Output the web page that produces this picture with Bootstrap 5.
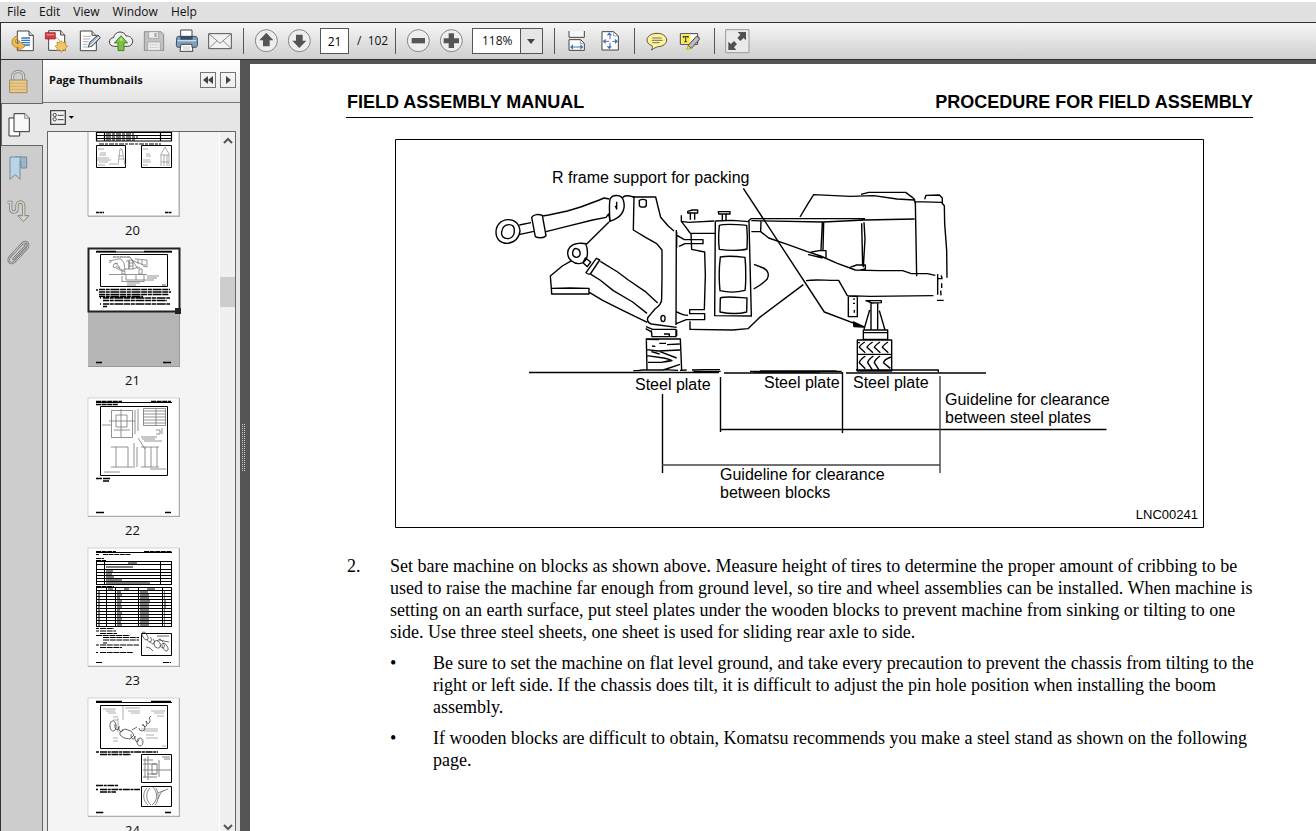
<!DOCTYPE html>
<html lang="en">
<head>
<meta charset="utf-8">
<meta name="viewport" content="width=device-width, initial-scale=1">
<title>Field Assembly Manual</title>
<link rel="stylesheet" href="https://cdn.jsdelivr.net/npm/bootstrap@5.3.0/dist/css/bootstrap.min.css">
<style>
  body { font-family: "Open Sans", "Noto Sans", sans-serif; font-size: 12px; line-height: 16px; color: #111; background: #fff; }
  svg { display: block; flex: none; }
  button { font: inherit; color: inherit; }
  .menu-strip { height: 22px; padding: 2px 0 0 7px; gap: 13px; background: linear-gradient(#fff 2px, #e1e1e1 2px); }
  .menu-strip a { color: #111; line-height: 20px; }
  .tool-strip { height: 38px; padding-left: 4px; border: solid #303030; border-width: 1px 0 1px 1px; background: linear-gradient(#f6f6f6, #cfcfcf); }
  .tool-btn { width: 33px; height: 36px; padding: 0; border: 0; background: none; display: flex; align-items: center; justify-content: center; }
  .tool-btn svg { width: 28px; height: 28px; }
  .sep { width: 1px; height: 26px; margin: 0 6px 0 7px; background: #555; }
  .page-field { width: 29px; height: 26px; padding: 0; text-align: center; border: 1px solid #555; background: #fff; }
  .page-total { width: 31px; margin-left: 8px; white-space: pre; }
  .zoom-field { width: 71px; height: 26px; padding: 0 0 0 9px; appearance: none; border: 1px solid #555; border-radius: 0; color: #111;
    background: url("data:image/svg+xml,%3Csvg xmlns='http://www.w3.org/2000/svg' width='22' height='24'%3E%3Cpath d='M0 0h22v24H0z' fill='%23e6e6e6'/%3E%3Cpath d='M.5 0v24' stroke='%23555'/%3E%3Cpath d='M7 10h8l-4 5z' fill='%23444'/%3E%3C/svg%3E") right center no-repeat #fff; }
  .workspace { min-height: 0; }
  .rail { width: 43px; background: #cdcdcd; border-left: 1px solid #303030; border-right: 1px solid #666; }
  .rail button { width: 41px; height: 43px; padding: 0 0 0 1px; border: 0; background: none; }
  .rail button svg { width: 32px; height: 42px; }
  .rail .on { width: 42px; background: #e7e7e7; border: solid #666; border-width: 1px 0 1px 1px; margin-right: -1px; padding: 0; }
  .side { width: 197px; background: #e6e6e6; }
  .side-head { height: 43px; padding: 0 4px 2px 6px; border-bottom: 1px solid #777; background: linear-gradient(#fff, #e4e4e4); }
  .side-title { font-size: 11px; line-height: 16px; font-weight: 700; margin: 0; }
  .mini-btn { width: 16px; height: 16px; padding: 0; border: 1px solid #777; background: none; }
  .side-opts { height: 28px; padding: 0 7px; }
  .opt-btn { padding: 0; border: 0; background: none; }
  .thumb-frame { margin: 0 4px; border: solid #666; border-width: 1px 1px 0 1px; background: #f4f4f4; }
  .thumb-list { padding-left: 38px; margin: 0; }
  .thumb-list svg { width: 95px; }
  .thumb-no { display: block; width: 93px; height: 28px; line-height: 22px; font-size: 13px; text-align: center; color: #111; }
  .track { width: 16px; background: #f0f0f0; border-left: 1px solid #fff; padding: 4px 0 0; }
  .track-gap { height: 19%; }
  .track-thumb { height: 30px; background: #cdcdcd; }
  .split { width: 10px; background: #555; padding: 5px 0 0 2px; }
  .grip { width: 4px; height: 48px; background: url("data:image/svg+xml,%3Csvg xmlns='http://www.w3.org/2000/svg' width='2' height='2'%3E%3Cpath d='M0 0h1v1H0z' fill='%23ccc'/%3E%3C/svg%3E"); }
  .doc { border-top: 4px solid #555; background: #fff; padding: 26px 63px 0 96px; color: #000; }
  .doc-head { font-family: "Liberation Sans", Arial, sans-serif; font-weight: 700; font-size: 18px; line-height: 24px; padding: 0 0 3px 1px; border-bottom: 1px solid #000; }
  .plate { margin: 21px 49px 27px 49px; }
  .plate text { font-family: "Liberation Sans", Arial, sans-serif; font-size: 16px; fill: #000; }
  .plate .plate-id { font-size: 13px; }
  .manual { font-family: "Liberation Serif", "Times New Roman", serif; font-size: 18px; line-height: 22px; padding-left: 1px; white-space: nowrap; }
  .manual p { margin: 0; }
  .num { width: 43px; flex: none; }
  .points { list-style: none; padding: 0; margin: 9px 0 0; }
  .points li { display: flex; margin-bottom: 9px; }
</style>
</head>
<body class="vh-100 d-flex flex-column overflow-hidden">

<nav class="menu-strip d-flex flex-shrink-0" aria-label="Menu">
  <a class="text-decoration-none" href="#">File</a>
  <a class="text-decoration-none" href="#">Edit</a>
  <a class="text-decoration-none" href="#">View</a>
  <a class="text-decoration-none" href="#">Window</a>
  <a class="text-decoration-none" href="#">Help</a>
</nav>

<div class="tool-strip d-flex align-items-center flex-shrink-0" role="toolbar" aria-label="Tools">
  <button class="tool-btn" aria-label="Open"><svg viewBox="22 81 84 84"><path d="M50 93h35l13 13v46H50z" fill="#fff" stroke="#444" stroke-width="3"/><path d="M85 93v13h13" fill="#ddd" stroke="#444" stroke-width="3"/><path d="M62 114h26M62 121h26M62 128h26M66 135h22" stroke="#2d77c8" stroke-width="4"/><path d="M50 108c-12 2-17 12-16 22 1 8 10 13 20 13v10l20-15-20-17v10c-8 0-10-3-9-8 0-5 3-7 7-8z" fill="#eebb4e" stroke="#9a6a12" stroke-width="2"/></svg></button>
  <button class="tool-btn" aria-label="Create PDF"><svg viewBox="121 81 84 84"><path d="M144 92h36l12 13v46h-48z" fill="#fff" stroke="#444" stroke-width="3"/><path d="M180 92v13h12" fill="#ddd" stroke="#444" stroke-width="3"/><path d="M165 112c8 5 14 11 16 18" stroke="#aaa" stroke-width="3" fill="none"/><path d="M134 98h30v19h-30z" fill="#d33b40" stroke="#8f171c" stroke-width="2"/><path d="M137 102h24v4h-24z" fill="#f08a8a"/><path d="m182 122 5 6 8-2-1 8 7 5-7 5 1 8-8-2-5 7-5-7-8 2 1-8-7-5 7-5-1-8 8 2z" fill="#f3c468" stroke="#a87620" stroke-width="2"/></svg></button>
  <button class="tool-btn" aria-label="Sign"><svg viewBox="220 81 84 84"><path d="M239 93h35l13 13v46h-48z" fill="#fff" stroke="#444" stroke-width="3"/><path d="M274 93v13h13" fill="#ddd" stroke="#444" stroke-width="3"/><path d="M247 109h24M247 117h22M247 125h17M247 133h13M247 141h20" stroke="#8a8a8a" stroke-width="2"/><path d="m263 141 4-14 25-22 7 8-24 25z" fill="#9db8d2" stroke="#333" stroke-width="2.500"/><path d="m267 139 28-28" stroke="#fff" stroke-width="3"/></svg></button>
  <button class="tool-btn" aria-label="Send online"><svg viewBox="321 81 84 84"><path d="M344 139c-10 0-16-6-16-13 0-8 6-13 13-13 1-10 9-17 19-17 9 0 15 5 18 12 10-1 20 6 20 16 0 9-7 15-16 15z" fill="#f2f2f2" stroke="#444" stroke-width="3"/><path d="m363 107 20 22h-11v23h-18v-23h-11z" fill="#7cc142" stroke="#35761b" stroke-width="2.500"/><path d="m363 112 7 10h-12z" fill="#b9e38f"/></svg></button>
  <button class="tool-btn" aria-label="Save"><svg viewBox="420 81 84 84"><path d="M433 95h50l8 8v48h-58z" fill="#c2c2c2" stroke="#8d8d8d" stroke-width="3"/><path d="M446 95h29v20h-29zM443 126h38v25h-38z" fill="#eee" stroke="#999" stroke-width="2"/><path d="M463 99h7v12h-7z" fill="#aaa"/><path d="M449 134h26M449 142h26" stroke="#aaa" stroke-width="2" stroke-dasharray="4 2"/></svg></button>
  <button class="tool-btn" aria-label="Print"><svg viewBox="519 81 84 84"><path d="M542 90h34v27h-34z" fill="#fff" stroke="#444" stroke-width="3"/><path d="M530 115q0-6 6-6h48q8 0 8 7v20q0 6-6 6h-51q-6 0-6-6z" fill="#7f9fbd" stroke="#37516a" stroke-width="3"/><path d="M541 108h37v11h-37z" fill="#394d60"/><path d="M532 122h57" stroke="#c9dae9" stroke-width="4"/><path d="M543 133h32l4 21h-39z" fill="#fff" stroke="#444" stroke-width="3"/><path d="M549 141h21M549 147h21" stroke="#aaa" stroke-width="2"/></svg></button>
  <button class="tool-btn" aria-label="Mail"><svg viewBox="618 81 84 84"><path d="M626 101h68v45h-68z" fill="#f2f2f2" stroke="#555" stroke-width="3"/><path d="m627 102 33 28 33-28M627 145l24-23M693 145l-24-23" fill="none" stroke="#777" stroke-width="2.500"/></svg></button>
  <span class="sep"></span>
  <button class="tool-btn" aria-label="Previous page"><svg viewBox="9 21 84 84"><circle cx="49" cy="62" r="33" fill="#eee" stroke="#858585" stroke-width="3"/><path d="m49 38 21 23H59v18H39V61H28z" fill="#555"/></svg></button>
  <button class="tool-btn" aria-label="Next page"><svg viewBox="108 21 84 84"><circle cx="148" cy="62" r="33" fill="#eee" stroke="#858585" stroke-width="3"/><path d="m148 84-21-22h11V44h20v18h11z" fill="#555"/></svg></button>
  <input class="page-field ms-1" type="text" value="21" aria-label="Page number">
  <span class="page-total">/  102</span>
  <span class="sep"></span>
  <button class="tool-btn" aria-label="Zoom out"><svg viewBox="465 21 84 84"><circle cx="505" cy="62" r="33" fill="#eee" stroke="#858585" stroke-width="3"/><path d="M485 54h40v16h-40z" fill="#555"/></svg></button>
  <button class="tool-btn" aria-label="Zoom in"><svg viewBox="564 21 84 84"><circle cx="604" cy="62" r="33" fill="#eee" stroke="#858585" stroke-width="3"/><path d="M596 40h16v15h15v15h-15v14h-16V70h-15V55h15z" fill="#555"/></svg></button>
  <select class="zoom-field mx-1" aria-label="Zoom"><option>118%</option><option>100%</option></select>
  <span class="sep"></span>
  <button class="tool-btn" aria-label="Fit width"><svg viewBox="73 21 84 84"><path d="M88 33v19h46V33" fill="#f8f8f8" stroke="#444" stroke-width="3"/><path d="M88 91V59h35l11 11v21z" fill="#fff" stroke="#444" stroke-width="3"/><path d="M122 60v11h11" fill="none" stroke="#777" stroke-width="2"/><path d="M94 81h34" stroke="#4a6fb5" stroke-width="3"/><path d="m91 81 9-8v16zM131 81l-9-8v16z" fill="#4a6fb5"/></svg></button>
  <button class="tool-btn" aria-label="Fit page"><svg viewBox="172 21 84 84"><path d="M187 35h35l14 13v42h-49z" fill="#fff" stroke="#444" stroke-width="3"/><path d="M222 35v13h14" fill="none" stroke="#777" stroke-width="2"/><path d="M211 45v38M195 64h34" stroke="#4a6fb5" stroke-width="3" stroke-dasharray="13 10"/><path d="m209 37 8 9h-16zM209 88l8-9h-16zM189 64l9-8v16zM235 64l-9-8v16z" fill="#4a6fb5"/></svg></button>
  <span class="sep"></span>
  <button class="tool-btn" aria-label="Comment"><svg viewBox="312 21 84 84"><path d="M351 40c17 0 29 9 29 20s-11 19-25 20c-6 1-13 5-21 10 4-6 4-10 2-13-9-3-15-9-15-17 0-11 13-20 30-20z" fill="#fff49b" stroke="#5b5934" stroke-width="3"/><path d="M337 54h28M335 61h33M337 68h22" stroke="#555" stroke-width="2.500"/></svg></button>
  <button class="tool-btn" aria-label="Highlight text"><svg viewBox="411 21 84 84"><path d="M421 41h52v32h-52z" fill="#fff" stroke="#444" stroke-width="3"/><path d="M424 44h27v26h-27z" fill="#ffea38"/><path d="M429 50h16M437 50v15M433 65h8M430 48v6M444 48v6" fill="none" stroke="#333" stroke-width="3"/><path d="m444 77 25-28 8 3 1 7-24 26z" fill="#bbb" stroke="#444" stroke-width="3"/><path d="m439 88 6-10 8 8z" fill="#ffe500" stroke="#b09c00" stroke-width="2"/></svg></button>
  <span class="sep"></span>
  <button class="tool-btn" aria-label="Full screen"><svg viewBox="551 21 84 84"><path d="M556 29h70v69h-70z" fill="#eaeaea" stroke="#999" stroke-width="3"/><path d="M617 36v25l-7-7-10 9-9-9 9-10-8-8zM564 90V65l8 7 9-9 9 9-9 10 7 8z" fill="#505050"/></svg></button>
</div>

<div class="workspace d-flex flex-grow-1 overflow-hidden">
  <div class="rail d-flex flex-column flex-shrink-0">
    <button aria-label="Security"><svg viewBox="8 0 96 126"><path d="M40 60V46c0-19 33-19 33 0v14" fill="none" stroke="#888" stroke-width="9"/><path d="M40 60V46c0-19 33-19 33 0v14" fill="none" stroke="#ddd" stroke-width="4"/><path d="M31 57h52v38H31z" fill="#e9c98a" stroke="#a38957" stroke-width="3"/><path d="M33 67h48M33 76h48M33 85h48" stroke="#c29f5c" stroke-width="2"/></svg></button>
    <button class="on" aria-label="Page thumbnails"><svg viewBox="7 128 96 126"><path d="M28 170h32v54H28z" fill="#fff" stroke="#333" stroke-width="3"/><path d="M43 157h33l13 13v41H43z" fill="#f8f8f8" stroke="#333" stroke-width="3"/><path d="M75 157v14h14" fill="#ddd" stroke="#666" stroke-width="2"/></svg></button>
    <button aria-label="Bookmarks"><svg viewBox="8 257 96 126"><path d="M48 287h34v33H65v-19H48z" fill="#9bb8c9" stroke="#718b9a" stroke-width="3"/><path d="M32 287h35q-5 3-5 10v57l-14-14-16 14z" fill="#b9d5e5" stroke="#718b9a" stroke-width="3"/></svg></button>
    <button aria-label="Articles"><svg viewBox="8 387 96 126"><path d="M25 424h9v18c0 16 19 14 19 0v-7c0-16 20-16 20 0v31" fill="none" stroke="#7f8678" stroke-width="10"/><path d="m56 464 33 0-17 18z" fill="#d3d6ca" stroke="#7f8678" stroke-width="3"/><path d="M26 424h8v18c0 16 19 14 19 0v-7c0-16 20-16 20 0v33" fill="none" stroke="#d3d6ca" stroke-width="5"/></svg></button>
    <button aria-label="Attachments"><svg viewBox="8 514 96 126"><path d="m42 592 34-36c7-8-3-15-9-8l-34 36c-12 14 2 28 14 15l35-38c13-15-3-27-15-14l-24 26" fill="none" stroke="#777" stroke-width="7" stroke-linecap="round"/><path d="m42 592 34-36c7-8-3-15-9-8l-34 36c-12 14 2 28 14 15l35-38c13-15-3-27-15-14l-24 26" fill="none" stroke="#ccc" stroke-width="3" stroke-linecap="round"/></svg></button>
  </div>

  <aside class="side d-flex flex-column flex-shrink-0">
    <div class="side-head d-flex align-items-center flex-shrink-0">
      <h1 class="side-title me-auto">Page Thumbnails</h1>
      <button class="mini-btn" aria-label="Collapse"><svg width="14" height="14"><path d="M7 3v8L2 7zM12 3v8L7 7z" fill="#444"/></svg></button>
      <button class="mini-btn ms-1" aria-label="Expand"><svg width="14" height="14"><path d="M5 3v8l5-4z" fill="#444"/></svg></button>
    </div>
    <div class="side-opts d-flex align-items-center flex-shrink-0">
      <button class="opt-btn" aria-label="Options"><svg width="25" height="15" viewBox="150 328 75 45"><path d="M152 330h44v41h-44z" fill="#f3f3f3" stroke="#444" stroke-width="4"/><circle cx="164" cy="343" r="5" fill="none" stroke="#444" stroke-width="3"/><circle cx="164" cy="356" r="5" fill="none" stroke="#444" stroke-width="3"/><path d="M173 344h18M173 357h18" stroke="#444" stroke-width="3"/><path d="M206 346h16l-8 8z" fill="#000"/></svg></button>
    </div>
    <div class="thumb-frame d-flex flex-grow-1 overflow-hidden">
      <ul class="thumb-list list-unstyled flex-grow-1">
        <li><svg height="87" viewBox="86 132 95 87"><path d="M88 130h92v87H88z" fill="#bbb"/><path d="M88 130h91v86H88z" fill="#fff" stroke="#aaa"/>
          <path d="M96 132.500h76M96 135.500h76M96 138.500h76M96 141h76M96.500 132v9M104.500 132v9M160.500 132v9M171.500 132v9" stroke="#000" stroke-width="1.200"/>
          <path d="M106 134h28M106 137h32M106 140h30M99 144h62" stroke="#000" stroke-width="1.200" stroke-dasharray="5 1 3 1"/>
          <path d="M96.500 145.500h29v22h-29zM141.500 145.500h30v22h-30z" fill="none" stroke="#000"/><path d="M98 149h6M100 153h6M99 155h7M97 158h12M97 160h14M99 162h9M98 165h7M109 164h8M118 165l2-16h2l3 16M119 159h5M118 156h5M143 149h5M146 154h4M146 156h5M143 160h7M143 162h8M143 165h5M161 166v-12l4-7 4 7v12M161 155h8M161 162h8M164 155v11M167 155v11" fill="none" stroke="#888" stroke-width=".7"/>
          <path d="M96 212.500h8M165 212.500h7" stroke="#000" stroke-width="1.500" stroke-dasharray="3 .5"/></svg><a class="thumb-no text-decoration-none" href="#">20</a></li>
        <li><svg height="122" viewBox="86 247 95 122"><path d="M88 248h92v119H88z" fill="#999"/><path d="M88 248h91v118H88z" fill="#b5b5b5"/><path d="M88.500 248.500h91v63h-91z" fill="#fff" stroke="#222" stroke-width="2"/><path d="M175 308h6v6h-6z" fill="#222"/>
          <path d="M96 252h76" stroke="#000"/><path d="M96 251.500h20M144 251.500h28" stroke="#000" stroke-width="1.500"/><path d="M100.500 254.500h67v32h-67z" fill="none" stroke="#000"/>
          <path d="M113 257h17" stroke="#555" stroke-dasharray="3 .5"/><path d="M109 262a1 1 0 1 0 0-1M110 261l8-2 3 0 3 4 1 7-3 0-6-4M114 264l2-1 4 5M114 264l-1 3 3 1 6 3M118 263l-3 1M126 261h3v8h-4M129 260v9h4v-9zM129 263h4M129 266h4M133 261l6 2 4 2h3M135 259l12 1v7l-4-1M138 260v4M142 260v5M133 269l5-2 2 1M122 271h3v3h-3zM139 269h3v5h-3zM130 257l8 12M109 274.500h38M122 276v6M126 275v5h28M136 275v5M144 275v7M122 281.500h22M147 276h12M147 278h10M127 283h13M127 285h9" fill="none" stroke="#666" stroke-width=".7"/>
          <path d="M162 285h4" stroke="#333" stroke-width=".8"/>
          <path d="M96 290h2M99 289.500h71M99 292h72M99 294.500h70M103 298h67M103 300.500h64M103 304h67M103 306.500h4M100 298h1M100 304h1M99 296.500h44" stroke="#000" stroke-width="1.400" stroke-dasharray="6 .7 4 .7 9 .7"/>
          <path d="M96 362.500h6M163 362.500h8" stroke="#000" stroke-width="1.500"/></svg><a class="thumb-no text-decoration-none" href="#">21</a></li>
        <li><svg height="122" viewBox="86 397 95 122"><path d="M88 398h92v119H88z" fill="#aaa"/><path d="M88 398h91v118H88z" fill="#fff" stroke="#bbb" stroke-width=".6"/>
          <path d="M96 402.500h76" stroke="#000"/><path d="M96 401.500h26M151 401.500h20M96 404.500h22" stroke="#000" stroke-width="1.500" stroke-dasharray="5 .6"/><path d="M100.500 406.500h67v69h-67z" fill="none" stroke="#000"/>
          <path d="M111.500 410.500h21v27h-21zM116 415h11v12h-11zM109 421h26M121 409v28M114 430h16M135 410v24M138 409v22M102 425h9M143.500 408.500h22v17h-22zM143 411h23M143 414h23M143 417h23M143 420h23M143 423h23M156 409v17M156 430h4v4h-4M162 428v6M141 437h16M138 438l7 11M111 447h17M111 467h22M116 447v20M128 447v20M134 443v25M137 447v20M141 447h18M145 447v20M151 447v20M157 447v20M141 467h18M104 472h16M150 469h16M142 439h13M144 441h18" fill="none" stroke="#777" stroke-width=".8"/>
          <path d="M96 478.500h6M103 478.500h7M103 481h6M96 512.500h8M165 512.500h6" stroke="#000" stroke-width="1.500"/></svg><a class="thumb-no text-decoration-none" href="#">22</a></li>
        <li><svg height="122" viewBox="86 547 95 122"><path d="M88 548h92v119H88z" fill="#aaa"/><path d="M88 548h91v118H88z" fill="#fff" stroke="#bbb" stroke-width=".6"/>
          <path d="M96 552.500h76" stroke="#000"/><path d="M96 551.500h20M144 551.500h28M96 554.500h3M103 554.500h28M96 558.500h8M96 560.500h10M96 586.500h18" stroke="#000" stroke-width="1.200" stroke-dasharray="5 .6"/>
          <path d="M96 561.500h76M96 564.500h76M96 569.500h76M96 572.500h76M96 575.500h76M96 578.500h76M96 581.500h76M96 584.500h76M96.500 561v24M104.500 561v24M160.500 561v24M171.500 561v24M96 587.500h76M96 590.500h76M96 593.500h76M96 596.500h76M96 599.500h76M96 602.500h76M96 605.500h76M96 608.500h76M96 611.500h76M96 614.500h76M96 617.500h76M96 620.500h76M96 623.500h76M96 626.500h76M96.500 587v40M106.500 587v40M115.500 587v40M138.500 587v40M162.500 587v40M171.500 587v40" stroke="#000"/>
          <path d="M106 567h27M106 571h7M106 574h6M106 577h8M106 580h16M106 583h44M128 563h9M108 589h5M124 589h5M147 589h8M117 592h4M140 592h8M117 595h5M140 595h9M117 598h3M140 598h9M117 601h5M140 601h10M117 604h4M140 604h9M117 607h5M140 607h9M117 610h3M140 610h9M117 613h5M140 613h9M117 616h4M140 616h9M117 619h5M140 619h9M117 622h4M140 622h9M117 625h5M140 625h9M98 592h2M98 595h2M98 598h2M98 601h2M98 604h2M98 607h2M98 610h2M98 613h2M98 616h2M98 619h2M98 622h2M98 625h2M164 592h1M164 595h1M164 598h1M164 601h2M164 604h2M164 607h2M164 610h1M164 613h1M164 616h1M164 619h1M164 622h1M164 625h1" stroke="#000"/>
          <path d="M96 628.500h3M100 628.500h14M96 631h3M100 631h16M100 633.500h17M96 635.500h34M103 637.500h36M103 640h36M103 643h4M96 645h3M100 645h39M100 647.500h22M96 652.500h2M100 652.500h33M96 662.500h6M163 662.500h8" stroke="#000" stroke-width="1.200" stroke-dasharray="6 .7"/>
          <path d="M141.500 633.500h30v22h-30z" fill="none" stroke="#000"/><path d="M143 637a2 4 -30 1 0 4-2 2 4-30 0 0-4 2M147 639a2 3-30 1 0 3-2M150 641a2 3-30 1 0 3-2M154 644a3 4-30 1 0 4-3 3 4-30 0 0-4 3M163 648a2 4-30 1 0 4-2 2 4-30 0 0-4 2M160 645a2 3-30 1 0 3-2M157 641l3-2 3 3M146 647l4 1 3 3M157 636h12M159 640l10 2" fill="none" stroke="#555" stroke-width=".9"/></svg><a class="thumb-no text-decoration-none" href="#">23</a></li>
        <li><svg height="122" viewBox="86 697 95 122"><path d="M88 698h92v119H88z" fill="#aaa"/><path d="M88 698h91v118H88z" fill="#fff" stroke="#bbb" stroke-width=".6"/>
          <path d="M96 702.500h76" stroke="#000"/><path d="M96 701.500h26M151 701.500h20" stroke="#000" stroke-width="1.500"/><path d="M100.500 705.500h67v43h-67zM141.500 754.500h30v28h-30zM141.500 786.500h30v20h-30z" fill="none" stroke="#000"/>
          <path d="M103 709h13M106 711h9M108 713h8M125 708h15M128 711h12M131 713h9M151 711h14M154 713h10M157 716h7M118 718v14M123 706v14M113 717h5M113 720h5M113 738h5M113 741h5M141 729h17M144 731h14M146 735h8M146 738h12M162 746h4" fill="none" stroke="#999" stroke-width=".8"/>
          <path d="M110 727a3 5 0 1 0 6-2 3 5 0 0 0-6 2M115 724a2 4 0 1 0 4 3M119 726a2 4 0 1 0 4 3M120 732l5-3 6 2 3 4-4 4-6-1-4-3zM131 734a2 4 0 1 0 4 2M135 736a2 4 0 1 0 4 3M137 742a3 4 0 1 0 5-3 3 4 0 0 0-5 3M132 730l5-3M139 728a3 3 0 1 0 3-3M143 724a2 3 0 1 0 3-3M146 721a2 3 0 1 0 3-3l2-2" fill="none" stroke="#444" stroke-width=".8"/>
          <path d="M143 760h10M143 764h14M148 756v24M152 764h5v10h-5zM159 760v17M143 770h28M143 777h14M147 774h9M145 758v20M162 757h8M164 759h6M147 788c-5 5-4 13 1 17M153 787c5 6 5 13-1 18M156 788c3 6 3 12-1 17M150 788c-5 5-4 13 1 17M158 793l10-4M158 799q2-7 6-9" fill="none" stroke="#777" stroke-width=".9"/>
          <path d="M96 752h3M100 752h58M100 754.500h31M96 785.500h22M96 789.500h2M100 789.500h40M100 792h16M96 812.500h8M165 812.500h6" stroke="#000" stroke-width="1.300" stroke-dasharray="7 .7 3 .7"/></svg><a class="thumb-no text-decoration-none" href="#">24</a></li>
      </ul>
      <div class="track d-flex flex-column">
        <svg width="15" height="9"><path d="m4 7 4-4 4 4" fill="none" stroke="#555" stroke-width="2"/></svg>
        <div class="track-gap"></div>
        <div class="track-thumb flex-shrink-0"></div>
        <svg class="mt-auto" width="15" height="9"><path d="m4 3 4 4 4-4" fill="none" stroke="#555" stroke-width="2"/></svg>
      </div>
    </div>
  </aside>

  <div class="split d-flex flex-column justify-content-center flex-shrink-0"><div class="grip"></div></div>

  <main class="doc flex-grow-1 overflow-hidden">
    <header class="doc-head d-flex justify-content-between"><span>FIELD ASSEMBLY MANUAL</span><span>PROCEDURE FOR FIELD ASSEMBLY</span></header>
    <figure class="plate">
      <svg class="w-100" viewBox="395 139 809 389" role="img" aria-label="Machine set on blocks">
        <path d="M395.500 139.500h808v388h-808z" fill="#fff" stroke="#000"/>
        <g fill="none" stroke="#000" stroke-width="4.200" stroke-linejoin="round">
          <g transform="translate(480 130) scale(.33333)">
            <path d="M120 303c-2 20-16 36-38 37-20 0-34-12-34-34 0-20 14-36 36-37 20-1 34 12 36 34zM103 301c1 15-8 25-20 25-13 0-20-8-18-20 2-14 10-22 22-22 10 0 16 6 16 17zM118 285l35-7M120 313l42-9M155 262c6-10 22-10 32-6l11 61c-8 8-22 8-32 3zM188 258l18-3 56-12 40-12 56-21 14-6 16 3M198 305l60-15 80-20 40-8 8-10 5 23"/>
            <path d="M389 274c1-20-3-50 1-66 6-16 36-16 40 3 5 16 2 32-8 44-10 12-22 15-33 19zM410 215v22l-4-10M387 276l-67 66c-14-4-38-4-50 9-12 14-7 34 5 42 14 12 34 10 42-3 8-10 6-36 0-48M275 392l-28 16-36 30 3 37M300 367c2 9-4 15-11 15-8-1-12-6-11-14 1-9 6-14 12-12 6 1 9 6 10 11zM214 475l56-1 57 1v17H215zM328 487l40 24 60 30 74 36M309 398l7-14 16 12-10 14zM318 428l31-43 10 5-28 42q-8 2-13-4zM361 394l52 32 32 24 50 34 38 35M333 433l27 17 40 32 58 34 43 34"/>
            <path d="M428 203c6-10 20-6 32-2h67l8 33 7 28 22 25 18 16M462 198l-2 102 38 23 32 18 16 19v82l-1 65c0 14-7 21-20 30l-16 19c-10 8-9 22 5 26l76 10M478 211c8-4 14-4 21 0v14c0 9-20 8-21 1zM543 560c6-6 13-3 12 4 1 16-12 11-12 3zM589 300l-1 285M591 316l22 13h56v12h-54l-18 8M633 310l2 48 39 8 2 70-3 103h-44v12h45v18h-55l-30 12M630 574v23M590 546c10 2 14 10 34 10M590 305v48"/>
            <path d="M498 590l20 8h70v22h-72l-2-19M497 596l16 9M497 627h104l4 94M499 626l2 93M497 628l40 1M516 648l10 1M538 640h20M561 644l38-2M500 659l34 4 66-3M514 665l25 7M501 677l50 7c34 8 34 10-2 12M540 665l50 19M504 697h40l27-6M550 720l50-17M460 722h14l12-2h66M550 719l44 2M552 612h16v8M590 600v18M600 721l20-1M636 720l40-1h44" />
          </g>
          <g transform="translate(660 180) scale(.33333)">
            <path d="M83 94l14-4h16v9H83zM91 101v18M104 101v18M175 95h35v7h-34zM187 103v18M198 103v18M64 106v18l14 18 12 17M65 124l20 3 78-4M90 160h75M166 124l-2 283 112 1M166 123l50-2 51 4 7 283M178 136c10-3 50-3 82 0l2 34-1 37c-20 6-60 5-83 1-3-20-2-50 0-72zM181 231c20-4 50-2 74 1 3 30 3 80 0 99-30 8-54 6-75 1-3-30-3-70 1-101zM181 354c16-6 50-2 80 0l-1 42c-30 8-60 4-80 0z"/>
            <path d="M265 123l8-7h342M274 122l216 4 124-6 150-3M303 124l-1 30-28 1M302 155l24 19 56 19 60 22 40 13 50 22 54 20 70 2h72l26 9h48l24 5M420 111l24-40 17-27 110 5 70-2 70 10 52 3M603 43l23-6h111l16 12 10 8M766 65l78 2 9 10 1 54 6 80 1 82M794 58l4-12 40-1 9 9v14M766 65l4 224M763 57l4 20M487 128l-4 82M491 128l-2 82M483 212h15v26M454 216l29-5M454 216l-8 8 42 10M612 127l3 50-5 85M605 130l3 128M570 262l20-7h26v12l-24 5M833 282v62M844 286l2 10h-14M845 310v14M842 332l1 14M831 361h20"/>
            <path d="M282 253l28 11c16 8 18 22 11 34-10 10-24 20-40 29M88 448l130 2 46-4 34-33 132-99M438 302c30-5 60 0 98-1l26 46 68 2 190-2M565 348l27 1v61h-27zM582 355v5M579 370h6M583 390v8"/>
            <path d="M250 25l243 371 114 43"/><path d="M580 426l32 15-30-1z" fill="#000"/>
            <path d="M618 362l18 7 28-1v-6zM633 370v78M653 370v78M629 390l-17 58M658 392l17 58M610 450h73v28h-73zM612 458h70M592 480h103v93H592zM592 523h103M614 486q-15 10-16 16l18 16M638 486q-15 10-17 16l18 16M660 486q-15 10-17 16l18 16M684 486q-15 10-17 16l18 16M616 528q-17 12-18 20l18 18M640 528q-16 12-17 20l14 22M660 528q-16 12-17 20l14 22M693 531q-22 8-22 18l20 16M592 488h8M588 570h247v6M270 574h275M280 576h200M300 573h230M100 574h82"/>
          </g>
          <g stroke-width="1.400"><path d="M529 372.500h190M724 373h28M750 373h92M846 373h140M662.500 394v79M720.500 377v55M842.500 372v61M720.500 429.500h386"/><path d="M662 465h278M940 376v97" stroke="#444"/></g>
        </g>
        <text x="552" y="183">R frame support for packing</text>
        <text x="635" y="390">Steel plate</text><text x="764" y="388">Steel plate</text><text x="853" y="388">Steel plate</text>
        <text x="945" y="405">Guideline for clearance</text><text x="945" y="423">between steel plates</text>
        <text x="720" y="480">Guideline for clearance</text><text x="720" y="498">between blocks</text>
        <text class="plate-id" x="1198" y="519" text-anchor="end">LNC00241</text>
      </svg>
    </figure>
    <section class="manual d-flex">
      <div class="num">2.</div>
      <div>
        <p>Set bare machine on blocks as shown above. Measure height of tires to determine the proper amount of cribbing to be<br>used to raise the machine far enough from ground level, so tire and wheel assemblies can be installed. When machine is<br>setting on an earth surface, put steel plates under the wooden blocks to prevent machine from sinking or tilting to one<br>side. Use three steel sheets, one sheet is used for sliding rear axle to side.</p>
        <ul class="points">
          <li><span class="num">•</span><span>Be sure to set the machine on flat level ground, and take every precaution to prevent the chassis from tilting to the<br>right or left side. If the chassis does tilt, it is difficult to adjust the pin hole position when installing the boom<br>assembly.</span></li>
          <li><span class="num">•</span><span>If wooden blocks are difficult to obtain, Komatsu recommends you make a steel stand as shown on the following<br>page.</span></li>
        </ul>
      </div>
    </section>
  </main>
</div>
<script src="https://cdn.jsdelivr.net/npm/bootstrap@5.3.0/dist/js/bootstrap.bundle.min.js"></script>
</body>
</html>
